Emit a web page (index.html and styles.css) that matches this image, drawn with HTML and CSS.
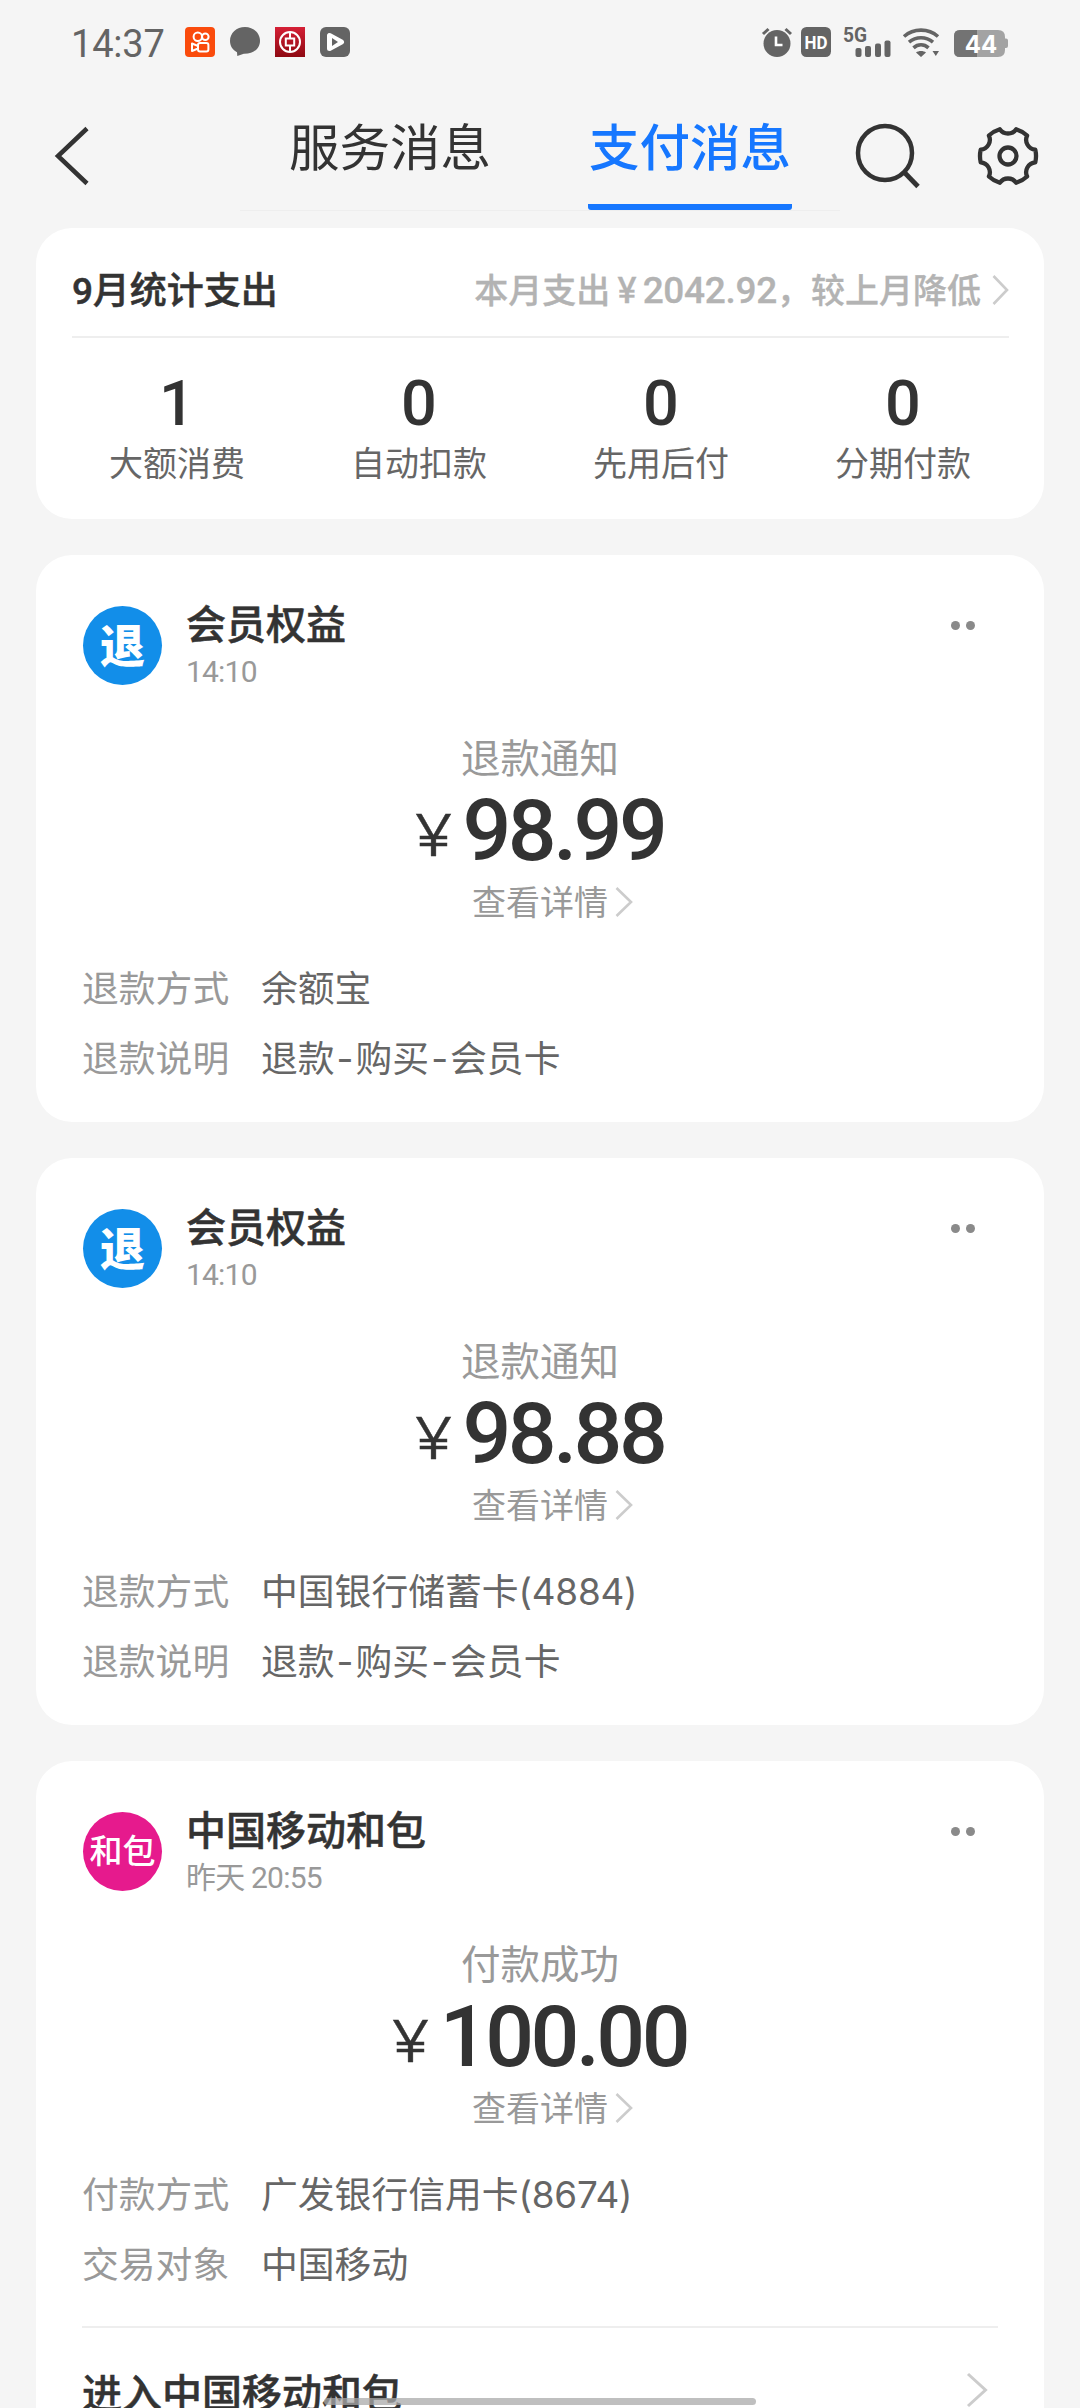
FILE: index.html
```html
<!DOCTYPE html>
<html lang="zh-CN">
<head>
<meta charset="utf-8">
<title>支付消息</title>
<link rel="stylesheet" href="styles.css">
</head>
<body>
<div class="screen">
  <div class="status">
    <span class="clock">14:37</span>
    <div class="notices">
      <svg width="30" height="30" viewBox="0 0 30 30"><rect width="30" height="30" rx="4" fill="#fa4b0c"/><g fill="none" stroke="#fff" stroke-width="2"><circle cx="12.800" cy="9.800" r="4.200"/><circle cx="20.300" cy="9.800" r="3.300"/><rect x="13" y="16" width="10.400" height="8.600" rx="2"/><path d="M7 16.500v7.500l6-2.500v-2.500z" stroke-linejoin="round"/></g></svg>
      <svg width="30" height="30" viewBox="0 0 30 30"><path d="M15 0C6.500 0 0 6 0 14c0 5 2.800 9 7 11.300L7.300 29l6.500-2.200C23.500 27 30 21.500 30 13.700 30 6 23.500 0 15 0z" fill="#646464"/></svg>
      <svg width="30" height="30" viewBox="0 0 30 30"><defs><linearGradient id="bank" x1="0" y1="0" x2="0" y2="1"><stop offset="0" stop-color="#d51f35"/><stop offset="1" stop-color="#8e0912"/></linearGradient></defs><rect width="30" height="30" fill="url(#bank)"/><g fill="none" stroke="#fff" stroke-width="2"><circle cx="15" cy="15" r="10"/><rect x="10.800" y="11.500" width="8.400" height="7"/><path d="M15 5v6.500M15 18.500V25"/></g></svg>
      <svg width="30" height="30" viewBox="0 0 30 30"><rect width="30" height="30" rx="6" fill="#646464"/><path d="M9.500 8.500v13L21.500 15z" fill="#fff" stroke="#fff" stroke-width="5" stroke-linejoin="round"/><path d="M12 11v8l6-4z" fill="#646464"/></svg>
    </div>
    <div class="system">
      <svg width="30" height="30" viewBox="0 0 30 30"><circle cx="15" cy="16.500" r="13.500" fill="#646464"/><path d="M1 7l5.500-5M29 7l-5.500-5" stroke="#646464" stroke-width="3"/><path d="M14 9.500V18h6.500" fill="none" stroke="#fff" stroke-width="2.600"/></svg>
      <svg class="hd" width="30" height="30" viewBox="0 0 30 30"><rect width="30" height="30" rx="5.500" fill="#646464"/><text x="15" y="22" text-anchor="middle" class="hd-text" textLength="23" lengthAdjust="spacingAndGlyphs">HD</text></svg>
      <svg class="signal" width="48" height="30" viewBox="0 0 48 30"><text x="0" y="14.500" class="net-text" textLength="24" lengthAdjust="spacingAndGlyphs">5G</text><g fill="#646464"><rect x="12.500" y="21" width="6" height="9" rx="2"/><rect x="22" y="19" width="6" height="11" rx="2"/><rect x="32" y="16.500" width="6" height="13.500" rx="2"/><rect x="41.500" y="13.500" width="6" height="16.500" rx="2"/></g></svg>
      <svg class="wifi" width="36" height="30" viewBox="0 0 36 30"><g fill="none" stroke="#646464" stroke-width="3.600"><path d="M1 9.500C10.500 1 25.500 1 35 9.500"/><path d="M6 15.200c7-6 17-6 24 0"/><path d="M10.500 20.800c4.500-4 10.500-4 15 0"/></g><path d="M13 25.500c2.500-2 7.500-2 10 0L18 30zM29.500 24h6.500l-3.200 5z" fill="#646464"/></svg>
      <svg class="battery" width="54" height="30" viewBox="0 0 54 30"><path d="M6 3h38q7 0 7 7v1.500h1q2 0 2 2V19q0 2-2 2h-1v2q0 7-7 7H6q-6 0-6-6V9q0-6 6-6z" fill="#a3a3a3"/><path d="M23 3H6Q0 3 0 9v15q0 6 6 6h17z" fill="#737373"/><text x="27" y="25.500" text-anchor="middle" class="battery-text">44</text></svg>
    </div>
  </div>

  <div class="nav">
    <svg class="back" width="36" height="60" viewBox="0 0 36 60"><path d="M33 2.500L4 30l29 27.500" fill="none" stroke="#333" stroke-width="4.500"/></svg>
    <div class="tabs">
      <div class="tab"><span>服务消息</span></div>
      <div class="tab active"><span>支付消息</span></div>
    </div>
    <svg class="search" width="66" height="68" viewBox="0 0 66 68"><g fill="none" stroke="#333"><circle cx="31" cy="31" r="27" stroke-width="4.500"/><path d="M50 50l14 14.500" stroke-width="4.800"/></g></svg>
    <svg class="gear" width="64" height="64" viewBox="-32 -32 64 64"><g fill="none" stroke="#333" stroke-width="4.300" stroke-linejoin="round"><path d="M27.300 -6.300A28 28 0 0 1 27.300 6.300A10 10 0 0 0 19.100 20.500A28 28 0 0 1 8.200 26.800A10 10 0 0 0 -8.200 26.800A28 28 0 0 1 -19.100 20.500A10 10 0 0 0 -27.300 6.300A28 28 0 0 1 -27.300 -6.300A10 10 0 0 0 -19.100 -20.500A28 28 0 0 1 -8.200 -26.800A10 10 0 0 0 8.200 -26.800A28 28 0 0 1 19.100 -20.500A10 10 0 0 0 27.300 -6.300z"/><circle r="8.500"/></g></svg>
  </div>

  <div class="feed">
    <section class="card summary">
      <div class="summary-head">
        <h2><span class="num">9</span>月统计支出</h2>
        <p>本月支出<span class="yen">¥</span><span class="num">2042.92</span>，较上月降低</p>
        <svg width="17" height="32" viewBox="0 0 17 32"><path d="M1.500 2L15 16 1.500 30" fill="none" stroke="#ccc" stroke-width="2.600"/></svg>
      </div>
      <div class="stats">
        <div class="stat"><b>1</b><span>大额消费</span></div>
        <div class="stat"><b>0</b><span>自动扣款</span></div>
        <div class="stat"><b>0</b><span>先用后付</span></div>
        <div class="stat"><b>0</b><span>分期付款</span></div>
      </div>
    </section>

    <section class="card message">
      <header><div class="avatar refund">退</div><div class="who"><h3>会员权益</h3><time>14:10</time></div><div class="more"><i></i><i></i></div></header>
      <div class="kind">退款通知</div>
      <div class="amount"><span class="sign">¥</span>98.99</div>
      <div class="detail">查看详情<svg width="18" height="32" viewBox="0 0 18 32"><path d="M1.500 2L16 16 1.500 30" fill="none" stroke="#ccc" stroke-width="2.600"/></svg></div>
      <dl><dt>退款方式</dt><dd>余额宝</dd><dt>退款说明</dt><dd>退款<span class="dash">-</span>购买<span class="dash">-</span>会员卡</dd></dl>
    </section>

    <section class="card message">
      <header><div class="avatar refund">退</div><div class="who"><h3>会员权益</h3><time>14:10</time></div><div class="more"><i></i><i></i></div></header>
      <div class="kind">退款通知</div>
      <div class="amount"><span class="sign">¥</span>98.88</div>
      <div class="detail">查看详情<svg width="18" height="32" viewBox="0 0 18 32"><path d="M1.500 2L16 16 1.500 30" fill="none" stroke="#ccc" stroke-width="2.600"/></svg></div>
      <dl><dt>退款方式</dt><dd>中国银行储蓄卡<span class="num">(4884)</span></dd><dt>退款说明</dt><dd>退款<span class="dash">-</span>购买<span class="dash">-</span>会员卡</dd></dl>
    </section>

    <section class="card message with-entry">
      <header><div class="avatar hebao">和包</div><div class="who"><h3>中国移动和包</h3><time>昨天 20:55</time></div><div class="more"><i></i><i></i></div></header>
      <div class="kind">付款成功</div>
      <div class="amount"><span class="sign">¥</span>100.00</div>
      <div class="detail">查看详情<svg width="18" height="32" viewBox="0 0 18 32"><path d="M1.500 2L16 16 1.500 30" fill="none" stroke="#ccc" stroke-width="2.600"/></svg></div>
      <dl><dt>付款方式</dt><dd>广发银行信用卡<span class="num">(8674)</span></dd><dt>交易对象</dt><dd>中国移动</dd></dl>
      <footer><span>进入中国移动和包</span><svg width="22" height="38" viewBox="0 0 22 38"><path d="M2 3l17.500 16L2 35" fill="none" stroke="#ccc" stroke-width="3"/></svg></footer>
    </section>
  </div>
  <div class="home-bar"></div>
</div>
</body>
</html>
```

FILE: styles.css
```css
* { box-sizing: border-box; margin: 0; padding: 0; }

body {
  background: #f5f5f5;
  color: #333;
  font-family: "Noto Sans CJK SC", sans-serif;
}

.screen {
  position: relative;
  width: 1080px;
  height: 2408px;
  overflow: hidden;
}

svg { display: block; flex: none; overflow: visible; }

/* Status bar */
.status {
  display: flex;
  height: 84px;
  padding: 27px 72px 0 71px;
}
.clock {
  width: 114px;
  font: 400 38px/35px Roboto, sans-serif;
  letter-spacing: -.2px;
  color: #646464;
}
.notices { display: flex; gap: 15px; }
.system { display: flex; margin-left: auto; }
.system .hd { margin-left: 9px; }
.system .signal { margin-left: 12px; }
.system .wifi { margin-left: 12px; }
.system .battery { margin-left: 15px; }
.hd-text { font: 700 19px Roboto, sans-serif; fill: #fff; }
.net-text { font: 700 20px Roboto, sans-serif; fill: #646464; }
.battery-text { font: 700 24px Inter, sans-serif; fill: #fff; }

/* Title bar */
.nav {
  display: flex;
  height: 144px;
  padding-left: 54px;
}
.back { margin-top: 42px; }
.tabs {
  display: flex;
  width: 600px;
  height: 127px;
  margin-left: 150px;
  border-bottom: 1px solid #eee;
}
.tab {
  display: flex;
  justify-content: center;
  width: 300px;
  font-size: 50.500px;
  line-height: 60px;
  padding-top: 30px;
}
.tab span { height: 96px; white-space: nowrap; }
.active span {
  width: 204px;
  text-align: center;
  color: #1677ff;
  font-weight: 500;
  border-bottom: 6px solid #1677ff;
  border-radius: 3px;
}
.search { margin: 38px 0 0 14px; }
.gear { margin: 40px 0 0 56px; }

/* Cards */
.feed {
  display: flex;
  flex-direction: column;
  gap: 36px;
  padding: 0 36px;
}
.card { background: #fff; border-radius: 36px; }

.summary { height: 291px; }
.summary-head {
  display: flex;
  align-items: center;
  height: 110px;
  margin: 0 35px 0 36px;
  padding-top: 15px;
  border-bottom: 2px solid #eee;
}
.summary-head h2 {
  font-size: 37px;
  line-height: 48px;
  font-weight: 500;
  -webkit-text-stroke: .5px;
}
.summary-head p {
  margin-left: auto;
  font-size: 34px;
  line-height: 48px;
  font-weight: 500;
  color: #b3b3b3;
  -webkit-text-stroke: .3px;
}
.summary-head svg { margin-left: 11px; }
.summary-head .num { font-family: Roboto, sans-serif; font-size: 37px; letter-spacing: -.3px; }
.summary-head .yen { font-family: Inter, sans-serif; font-size: 35px; padding: 0 6px 0 7px; }
.stats {
  display: grid;
  grid-template-columns: repeat(4, 242px);
  padding: 31px 20px 0;
}
.stat { display: flex; flex-direction: column; align-items: center; }
.stat b { font: 500 63px/70px Roboto, sans-serif; }
.stat span { font-size: 34px; line-height: 50px; margin-top: -2px; color: #666; }

.message { height: 567px; padding: 0 46px; flex: none; }
.with-entry { height: 700px; }
.message header { display: flex; height: 160px; padding: 51px 0 0 1px; }
.avatar {
  width: 79px;
  height: 79px;
  border-radius: 50%;
  color: #fff;
  text-align: center;
  white-space: nowrap;
}
.refund { background: #128ee9; font-size: 45px; font-weight: 900; line-height: 76px; }
.hebao { background: #e61a8d; font-size: 33px; font-weight: 500; line-height: 74px; }
.who { margin: -7px 0 0 24px; }
.who h3 { font-size: 40px; line-height: 46px; font-weight: 500; -webkit-text-stroke: .5px; }
.who time {
  display: block;
  font: 400 30px/36px Roboto, "Noto Sans CJK SC", sans-serif;
  letter-spacing: -.8px;
  color: #999;
  margin-top: 9px;
}
.more { display: flex; gap: 6px; margin: 15px 23px 0 auto; }
.more i { width: 9px; height: 9px; border-radius: 50%; background: #8a8a8a; }

.kind {
  height: 60px;
  margin-top: 11px;
  text-align: center;
  font-size: 39.500px;
  line-height: 60px;
  color: #999;
}
.amount {
  height: 88px;
  padding: 1px 0 0 2px;
  text-align: center;
  font: 500 86px/88px Roboto, sans-serif;
  letter-spacing: -3.500px;
}
.sign {
  display: inline-block;
  font: 300 57px/40px Inter, sans-serif;
  letter-spacing: 0;
  vertical-align: 4px;
  margin-right: 14px;
  transform: scaleX(1.2);
  -webkit-text-stroke: .4px;
}
.detail {
  display: flex;
  justify-content: center;
  align-items: center;
  height: 50px;
  margin-top: 2px;
  padding-left: 25px;
  font-size: 34px;
  line-height: 50px;
  color: #999;
}
.detail svg { margin-left: 7px; margin-top: 2px; }
.message dl {
  display: grid;
  grid-template-columns: 179px 1fr;
  grid-auto-rows: 70px;
  margin-top: 25px;
  font-size: 36.800px;
  line-height: 70px;
}
.message dt { color: #999; }
.message dd { color: #666; }
.message dd .num { font-family: Inter, sans-serif; letter-spacing: -.2px; }
.message .dash { font-family: Inter, sans-serif; padding: 0 2px; }
.message footer {
  display: flex;
  justify-content: space-between;
  height: 130px;
  margin-top: 29px;
  padding: 43px 10px 0 0;
  border-top: 2px solid #eee;
  font-size: 40px;
  line-height: 40px;
  font-weight: 500;
  -webkit-text-stroke: .5px;
}

/* Gesture handle drawn above the page */
.home-bar {
  position: absolute;
  left: 324px;
  top: 2398px;
  width: 432px;
  height: 7px;
  border-radius: 4px;
  background: rgba(170, 170, 170, .75);
}
```
